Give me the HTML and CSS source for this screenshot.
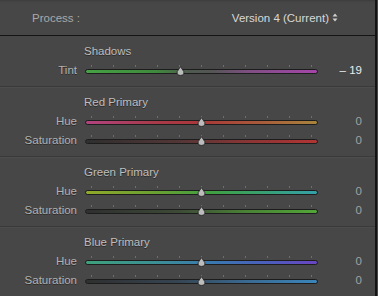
FILE: index.html
```html
<!DOCTYPE html>
<html lang="en">
<head>
  <meta charset="UTF-8">
  <title>Calibration</title>
  <link rel="stylesheet" href="styles.css">
</head>
<body>
  <div class="panel">
    <div class="header">
      <span class="process">Process :</span>
      <span class="version">Version 4 (Current)
        <svg class="updown" width="6" height="9" viewBox="0 0 6 9"><path d="M3 0.5 L5.5 3.5 H0.5 Z M3 8.5 L5.5 5.5 H0.5 Z" fill="#cfcfcf"/></svg>
      </span>
    </div>

    <section class="group first">
      <div class="group-title">Shadows</div>
      <div class="row">
        <span class="label">Tint</span>
        <div class="slider">
          <div class="ticks"></div>
          <div class="track tint"></div>
          <svg class="thumb" style="left: 41.2%;" width="9" height="10" viewBox="0 0 9 10"><path d="M4.5 0.6 L7.8 5.6 Q8.6 9.4 4.5 9.4 Q0.4 9.4 1.2 5.6 Z" fill="#bcbcbc" stroke="#262626" stroke-width="0.9"/></svg>
        </div>
        <span class="value bright">– 19</span>
      </div>
    </section>

    <section class="group">
      <div class="group-title">Red Primary</div>
      <div class="row">
        <span class="label">Hue</span>
        <div class="slider">
          <div class="ticks"></div>
          <div class="track red-hue"></div>
          <svg class="thumb" style="left: 50%;" width="9" height="10" viewBox="0 0 9 10"><path d="M4.5 0.6 L7.8 5.6 Q8.6 9.4 4.5 9.4 Q0.4 9.4 1.2 5.6 Z" fill="#bcbcbc" stroke="#262626" stroke-width="0.9"/></svg>
        </div>
        <span class="value">0</span>
      </div>
      <div class="row">
        <span class="label">Saturation</span>
        <div class="slider">
          <div class="ticks"></div>
          <div class="track red-sat"></div>
          <svg class="thumb" style="left: 50%;" width="9" height="10" viewBox="0 0 9 10"><path d="M4.5 0.6 L7.8 5.6 Q8.6 9.4 4.5 9.4 Q0.4 9.4 1.2 5.6 Z" fill="#bcbcbc" stroke="#262626" stroke-width="0.9"/></svg>
        </div>
        <span class="value">0</span>
      </div>
    </section>

    <section class="group">
      <div class="group-title">Green Primary</div>
      <div class="row">
        <span class="label">Hue</span>
        <div class="slider">
          <div class="ticks"></div>
          <div class="track green-hue"></div>
          <svg class="thumb" style="left: 50%;" width="9" height="10" viewBox="0 0 9 10"><path d="M4.5 0.6 L7.8 5.6 Q8.6 9.4 4.5 9.4 Q0.4 9.4 1.2 5.6 Z" fill="#bcbcbc" stroke="#262626" stroke-width="0.9"/></svg>
        </div>
        <span class="value">0</span>
      </div>
      <div class="row">
        <span class="label">Saturation</span>
        <div class="slider">
          <div class="ticks"></div>
          <div class="track green-sat"></div>
          <svg class="thumb" style="left: 50%;" width="9" height="10" viewBox="0 0 9 10"><path d="M4.5 0.6 L7.8 5.6 Q8.6 9.4 4.5 9.4 Q0.4 9.4 1.2 5.6 Z" fill="#bcbcbc" stroke="#262626" stroke-width="0.9"/></svg>
        </div>
        <span class="value">0</span>
      </div>
    </section>

    <section class="group">
      <div class="group-title">Blue Primary</div>
      <div class="row">
        <span class="label">Hue</span>
        <div class="slider">
          <div class="ticks"></div>
          <div class="track blue-hue"></div>
          <svg class="thumb" style="left: 50%;" width="9" height="10" viewBox="0 0 9 10"><path d="M4.5 0.6 L7.8 5.6 Q8.6 9.4 4.5 9.4 Q0.4 9.4 1.2 5.6 Z" fill="#bcbcbc" stroke="#262626" stroke-width="0.9"/></svg>
        </div>
        <span class="value">0</span>
      </div>
      <div class="row">
        <span class="label">Saturation</span>
        <div class="slider">
          <div class="ticks"></div>
          <div class="track blue-sat"></div>
          <svg class="thumb" style="left: 50%;" width="9" height="10" viewBox="0 0 9 10"><path d="M4.5 0.6 L7.8 5.6 Q8.6 9.4 4.5 9.4 Q0.4 9.4 1.2 5.6 Z" fill="#bcbcbc" stroke="#262626" stroke-width="0.9"/></svg>
        </div>
        <span class="value">0</span>
      </div>
    </section>
  </div>
</body>
</html>
```

FILE: styles.css
```css
* {
  margin: 0;
  padding: 0;
  box-sizing: border-box;
}

body {
  width: 378px;
  height: 296px;
  overflow: hidden;
  background: #474747;
  font-family: "Liberation Sans", Arial, sans-serif;
  font-size: 11.5px;
  color: #b2b2b2;
}

.panel {
  width: 377px;
  height: 296px;
  background: #474747;
  border-right: 2px solid #141414;
}

.header {
  height: 35px;
  display: flex;
  align-items: center;
  justify-content: space-between;
  padding: 0 37px 0 32px;
  background: linear-gradient(to bottom, #3c3c3c 0, #454545 2px, #474747 4px);
}

.process {
  color: #a9a9a9;
}

.version {
  color: #d8d8d8;
  display: flex;
  align-items: center;
  gap: 3px;
}

.group {
  height: 70px;
  padding-top: 6px;
  border-top: 1px solid #3a3a3a;
  box-shadow: inset 0 1px 0 #4d4d4d;
}

.group.first {
  height: 51px;
  border-top-color: #151515;
  box-shadow: none;
}

.group-title {
  height: 18px;
  line-height: 18px;
  margin-bottom: 1px;
  padding-left: 84px;
  color: #bdbdbd;
  text-shadow: 0 1px 0 #2c2c2c;
}

.row {
  height: 19px;
  display: flex;
  align-items: center;
}

.label {
  width: 77px;
  margin-right: 8px;
  text-align: right;
  line-height: 19px;
  text-shadow: 0 1px 0 #2c2c2c;
}

.slider {
  position: relative;
  width: 233px;
  height: 19px;
}

.ticks {
  position: absolute;
  top: 4px;
  left: 6px;
  width: 221px;
  height: 2px;
  background: repeating-linear-gradient(to right, #6e6e6e 0 1px, transparent 1px 22px);
}

.track {
  position: absolute;
  top: 8px;
  left: 0;
  width: 233px;
  height: 5px;
  border: 1px solid #1d1d1d;
  border-radius: 3px;
}

.thumb {
  position: absolute;
  top: 5px;
  margin-left: -4.5px;
}

.tint {
  background: linear-gradient(to right, #46a244 0%, #3f8a3d 30%, #4f5a4f 45%, #555 55%, #7e4f82 70%, #a545aa 100%);
}

.red-hue {
  background: linear-gradient(to right, #b0437f 0%, #a83a4a 30%, #a83838 50%, #a85a3a 75%, #a8843c 100%);
}

.red-sat {
  background: linear-gradient(to right, #2f2f2f 0%, #533636 40%, #8a3535 70%, #b23434 100%);
}

.green-hue {
  background: linear-gradient(to right, #8fa82a 0%, #6aa032 30%, #3fa043 55%, #38a07a 80%, #35a0a8 100%);
}

.green-sat {
  background: linear-gradient(to right, #2f2f2f 0%, #3d4a36 40%, #4a8336 70%, #52a638 100%);
}

.blue-hue {
  background: linear-gradient(to right, #3ea07c 0%, #3c8f95 30%, #3a78b0 55%, #4d5cbc 80%, #6a44c2 100%);
}

.blue-sat {
  background: linear-gradient(to right, #2f2f2f 0%, #364552 40%, #3a6a92 70%, #3a85ba 100%);
}

.value {
  width: 44px;
  text-align: right;
  line-height: 19px;
  color: #a2a2a2;
}

.value.bright {
  color: #ececec;
}
```
